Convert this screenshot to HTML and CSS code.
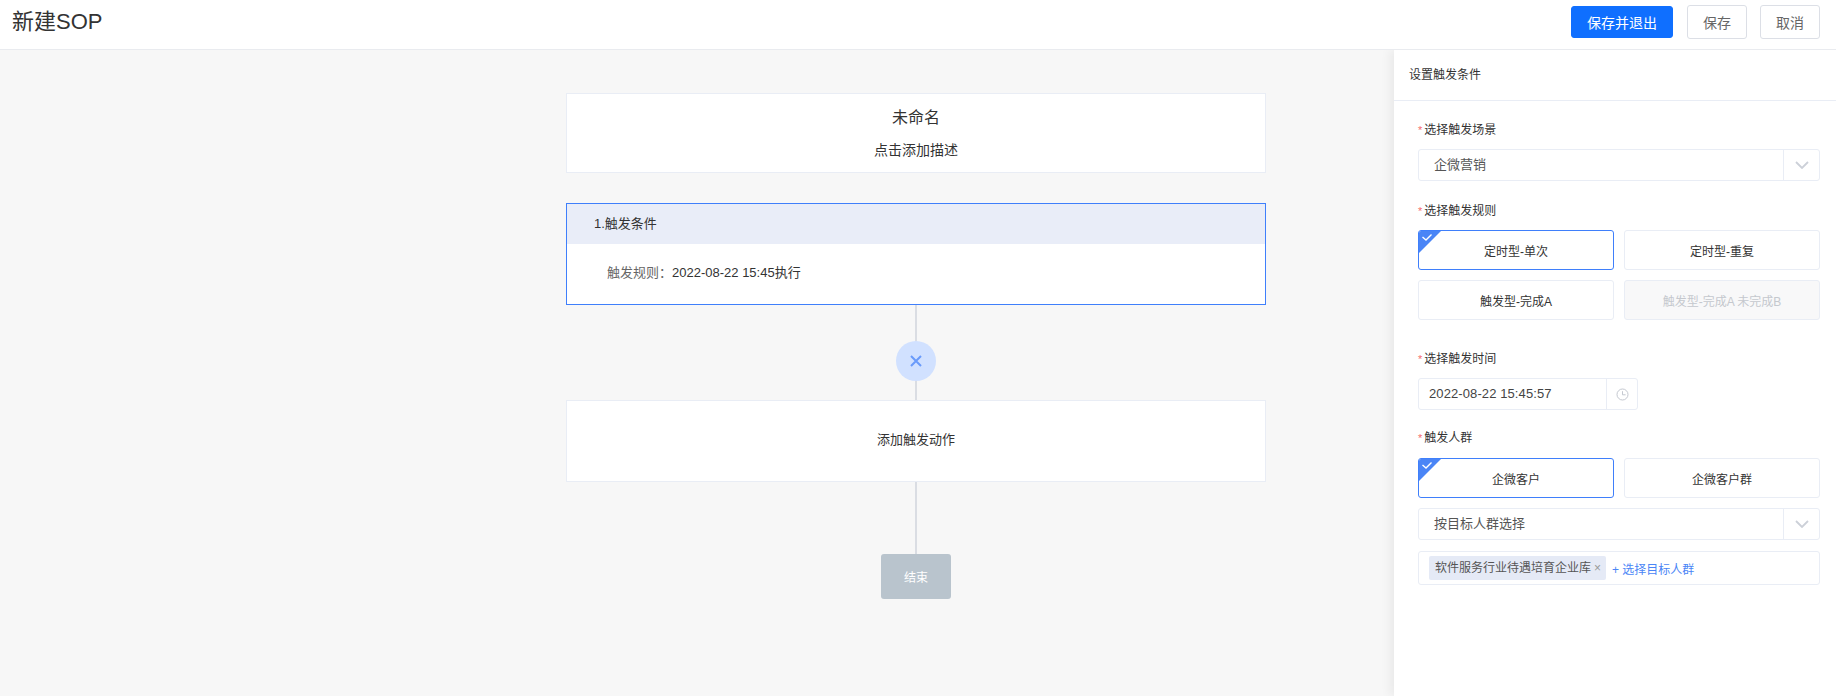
FILE: index.html
```html
<!DOCTYPE html>
<html lang="zh-CN">
<head>
<meta charset="utf-8">
<title>新建SOP</title>
<link rel="stylesheet" href="styles.css">
</head>
<body>
<div class="app">
  <header class="topbar">
    <h1 class="page-title">新建SOP</h1>
    <div class="top-actions">
      <button class="btn btn-primary">保存并退出</button>
      <button class="btn btn-plain">保存</button>
      <button class="btn btn-plain">取消</button>
    </div>
  </header>
  <div class="main">
    <section class="canvas">
      <div class="flow">
        <div class="card card-info">
          <div class="info-name">未命名</div>
          <div class="info-desc">点击添加描述</div>
        </div>
        <div class="card card-active">
          <div class="step-head">1.触发条件</div>
          <div class="step-body"><span class="muted">触发规则：</span>2022-08-22 15:45执行</div>
        </div>
        <div class="connector connector-add">
          <span class="add-circle">
            <svg width="14" height="14" viewBox="0 0 14 14"><path d="M2 2 L12 12 M12 2 L2 12" stroke="#6a9bfb" stroke-width="2" fill="none"/></svg>
          </span>
        </div>
        <div class="card card-action">添加触发动作</div>
        <div class="connector connector-end"></div>
        <div class="end-node">结束</div>
      </div>
    </section>
    <aside class="panel">
      <div class="panel-title">设置触发条件</div>
      <div class="panel-body">
        <div class="field field-scene">
          <div class="label"><i>*</i>选择触发场景</div>
          <div class="select">
            <span class="select-value">企微营销</span>
            <span class="select-arrow"><svg width="14" height="8" viewBox="0 0 14 8"><path d="M1 1 L7 7 L13 1" stroke="#ccd0d8" stroke-width="1.8" fill="none"/></svg></span>
          </div>
        </div>
        <div class="field field-rule">
          <div class="label"><i>*</i>选择触发规则</div>
          <div class="options">
            <div class="option checked">
              <svg class="corner" width="22" height="22" viewBox="0 0 22 22"><path d="M0 0 H22 L0 22 Z" fill="#4a85f6"/><path d="M3.5 6 L7 9 L12.5 3.5" stroke="#fff" stroke-width="1.4" fill="none"/></svg>
              定时型-单次
            </div>
            <div class="option">定时型-重复</div>
            <div class="option">触发型-完成A</div>
            <div class="option disabled">触发型-完成A 未完成B</div>
          </div>
        </div>
        <div class="field field-time">
          <div class="label"><i>*</i>选择触发时间</div>
          <div class="datetime">
            <span class="datetime-value">2022-08-22 15:45:57</span>
            <span class="datetime-icon"><svg width="13" height="13" viewBox="0 0 13 13"><circle cx="6.5" cy="6.5" r="5.5" stroke="#c4c8d0" stroke-width="1" fill="none"/><path d="M6.5 3.2 V6.8 H9.6" stroke="#c4c8d0" stroke-width="1" fill="none"/></svg></span>
          </div>
        </div>
        <div class="field field-crowd">
          <div class="label"><i>*</i>触发人群</div>
          <div class="options">
            <div class="option checked">
              <svg class="corner" width="22" height="22" viewBox="0 0 22 22"><path d="M0 0 H22 L0 22 Z" fill="#4a85f6"/><path d="M3.5 6 L7 9 L12.5 3.5" stroke="#fff" stroke-width="1.4" fill="none"/></svg>
              企微客户
            </div>
            <div class="option">企微客户群</div>
          </div>
          <div class="select select-crowd">
            <span class="select-value">按目标人群选择</span>
            <span class="select-arrow"><svg width="14" height="8" viewBox="0 0 14 8"><path d="M1 1 L7 7 L13 1" stroke="#ccd0d8" stroke-width="1.8" fill="none"/></svg></span>
          </div>
          <div class="tag-box">
            <span class="tag">软件服务行业待遇培育企业库<span class="tag-x">×</span></span>
            <span class="tag-add">+ 选择目标人群</span>
          </div>
        </div>
      </div>
    </aside>
  </div>
</div>
</body>
</html>
```

FILE: styles.css
```css
* { box-sizing: border-box; }
html, body { margin: 0; height: 100%; }
body {
  font-family: "Liberation Sans", "Noto Sans CJK SC", sans-serif;
  font-size: 12px;
  color: #333;
  background: #fff;
  overflow: hidden;
}
.app { width: 1836px; height: 696px; display: flex; flex-direction: column; }

.topbar {
  position: relative;
  z-index: 2;
  height: 50px;
  flex: none;
  display: flex;
  align-items: center;
  justify-content: space-between;
  padding: 0 16px 5px 12px;
  background: #fff;
  border-bottom: 1px solid #e9ebef;
}
.page-title { margin: 0; font-size: 22px; font-weight: 400; color: #333; line-height: 1; }
.top-actions { display: flex; align-items: center; gap: 14px; }
.btn {
  font-family: inherit;
  font-size: 14px;
  height: 34px;
  border-radius: 3px;
  padding: 0;
  cursor: pointer;
}
.btn-primary { width: 102px; height: 32px; background: #0f6fff; border: 1px solid #0f6fff; color: #fff; }
.btn-plain { width: 60px; background: #fff; border: 1px solid #dcdfe6; color: #666; }
.btn-plain:last-child { margin-left: -1px; }

.main { flex: 1; display: flex; min-height: 0; }
.canvas { flex: 1; background: #f7f7f7; padding: 43px 0 0 566px; }
.flow { width: 700px; display: flex; flex-direction: column; align-items: center; }

.card { width: 700px; background: #fff; border: 1px solid #e9edf5; }
.card-info { height: 80px; text-align: center; padding-top: 14px; margin-bottom: 30px; }
.info-name { font-size: 16px; line-height: 20px; color: #333; }
.info-desc { font-size: 14px; line-height: 20px; margin-top: 12px; color: #333; }
.card-active { height: 102px; border-color: #3f7ffb; }
.step-head { height: 40px; background: #e9edf8; padding-left: 27px; font-size: 13px; line-height: 40px; color: #333; }
.step-body { padding: 19px 0 0 40px; font-size: 13px; line-height: 20px; color: #333; }
.muted { color: #666; }

.connector { position: relative; width: 2px; background: #dadde3; flex: none; }
.connector-add { height: 95px; }
.add-circle {
  position: absolute;
  left: -19px;
  top: 36px;
  width: 40px;
  height: 40px;
  border-radius: 50%;
  background: #d1e1ff;
  display: flex;
  align-items: center;
  justify-content: center;
}
.card-action { height: 82px; display: flex; align-items: center; justify-content: center; font-size: 13px; color: #333; padding-bottom: 5px; }
.connector-end { height: 72px; }
.end-node {
  width: 70px;
  height: 45px;
  background: #b9c4cd;
  border-radius: 3px;
  color: #fff;
  font-size: 12px;
  display: flex;
  align-items: center;
  justify-content: center;
}

.panel {
  width: 442px;
  flex: none;
  background: #fff;
  box-shadow: -4px 0 10px rgba(0, 0, 0, 0.06);
  z-index: 1;
}
.panel-title {
  height: 51px;
  padding: 0 0 0 15px;
  font-size: 12px;
  line-height: 50px;
  color: #333;
  border-bottom: 1px solid #e9edf5;
}
.panel-body { padding: 0 16px 0 24px; }
.field { display: flex; flex-direction: column; }
.label { height: 20px; line-height: 20px; font-size: 12px; color: #333; }
.label i { font-style: normal; color: #f56c6c; margin-right: 2px; font-size: 11px; }
.field-scene { padding-top: 19px; }
.field-rule { padding-top: 20px; }
.field-time { padding-top: 29px; }
.field-crowd { padding-top: 18px; }

.select {
  margin-top: 9px;
  height: 32px;
  width: 402px;
  display: flex;
  border: 1px solid #e9edf5;
  border-radius: 3px;
  background: #fff;
}
.select-value { flex: 1; padding-left: 15px; line-height: 30px; font-size: 13px; color: #555; }
.select-arrow {
  width: 36px;
  border-left: 1px solid #e9edf5;
  display: flex;
  align-items: center;
  justify-content: center;
}
.select-crowd { margin-top: 10px; }

.options { margin-top: 9px; width: 402px; display: grid; grid-template-columns: 196px 196px; column-gap: 10px; row-gap: 10px; }
.field-crowd .options { margin-top: 10px; }
.option {
  position: relative;
  height: 40px;
  border: 1px solid #e9edf5;
  border-radius: 3px;
  background: #fff;
  display: flex;
  align-items: center;
  justify-content: center;
  font-size: 12px;
  color: #333;
  overflow: hidden;
}
.option.checked { border-color: #3f7ffb; }
.option.disabled { background: #f8f8f9; color: #c5c8ce; }
.corner { position: absolute; left: 0; top: 0; }

.datetime {
  margin-top: 9px;
  width: 220px;
  height: 32px;
  display: flex;
  border: 1px solid #e9edf5;
  border-radius: 3px;
}
.datetime-value { flex: 1; padding-left: 10px; line-height: 30px; font-size: 13px; color: #444; letter-spacing: 0.1px; }
.datetime-icon { width: 31px; border-left: 1px solid #e9edf5; display: flex; align-items: center; justify-content: center; }

.tag-box {
  margin-top: 11px;
  width: 402px;
  height: 34px;
  display: flex;
  align-items: center;
  gap: 6px;
  padding-left: 10px;
  border: 1px solid #e9edf5;
  border-radius: 3px;
}
.tag {
  height: 24px;
  line-height: 24px;
  background: #e5eaf6;
  border-radius: 2px;
  padding: 0 5px 0 6px;
  font-size: 12px;
  color: #555;
  white-space: nowrap;
}
.tag-x { margin-left: 3px; color: #999; }
.tag-add { color: #4a85f6; font-size: 12px; }
```
